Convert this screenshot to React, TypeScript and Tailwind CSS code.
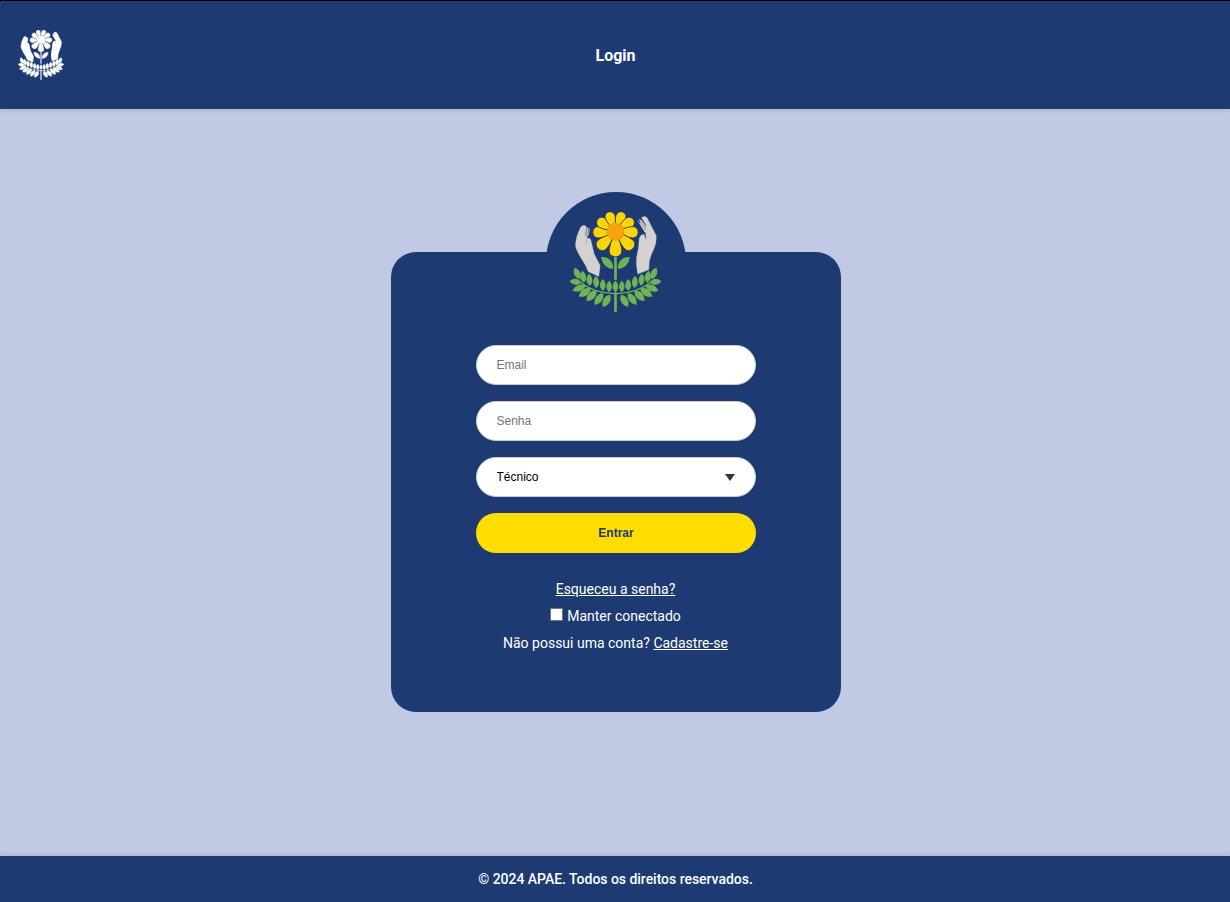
import React from "react";

type Leaf = [x: number, y: number, angle: number, length: number, width: number];

const SIDE_LEAVES: Leaf[] = [
  [111, 264, -24, 37, 18],
  [129, 274, -8, 36, 18],
  [148, 283, -4, 36, 17],
  [168, 290, -3, 36, 17],
  [188, 298, 0, 35, 17],
  [207, 303, 0, 34, 16],
  [106, 289, -83, 35, 18],
  [117, 308, 248, 42, 19],
  [134, 321, 236, 43, 20],
  [154, 331, 224, 43, 20],
  [176, 341, 216, 43, 20],
  [199, 346, 210, 42, 20],
];

const PETALS: [angle: number, reach: number, half: number][] = [
  [0, 75, 19],
  [46, 73, 18],
  [88, 68, 17],
  [124, 65, 16],
  [160, 63, 15],
  [200, 63, 15],
  [236, 65, 16],
  [272, 68, 17],
  [314, 73, 18],
];

function leafPath(length: number, width: number) {
  const h = length / 2;
  return `M0 ${-h} C${width * 0.68} ${-h * 0.4} ${width * 0.68} ${h * 0.5} 0 ${h} C${-width * 0.68} ${h * 0.5} ${-width * 0.68} ${-h * 0.4} 0 ${-h}Z`;
}

function Branch({ color }: { color: string }) {
  return (
    <g fill={color}>
      {SIDE_LEAVES.map(([x, y, angle, length, width], i) => (
        <path key={i} d={leafPath(length, width)} transform={`translate(${x} ${y}) rotate(${angle})`} />
      ))}
      <path d="M118 288 Q157 322 226 325" fill="none" stroke={color} strokeWidth="4" />
      <path d="M183 215 C203 213 220 227 219 250 C198 251 186 234 183 215Z" />
    </g>
  );
}

function Logo({ mono = false, className }: { mono?: boolean; className: string }) {
  const green = mono ? "#fff" : "#6fb356";
  const hand = mono ? "#fff" : "#d3d2d0";
  const petal = mono ? "#fff" : "#fed501";
  const core = mono ? "#fff" : "#f7a413";
  return (
    <svg viewBox="90 80 272 301" className={className} aria-hidden="true">
      <g fill={hand} stroke={hand} strokeWidth={mono ? 5 : 1}>
        <path d="M122 125 Q126 118 136 121 L139 126 L135 150 L138 154 L142 129 L145 128 L141 156 Q137 162 138 176 L140 160 Q147 155 152 163 L162 206 L180 240 L176 273 L144 258 Q139 242 126 223 Q108 194 106 180 Q107 154 122 125Z" />
        <path d="M304 97 Q313 90 321 98 L348 151 Q350 173 337 199 Q324 224 326 252 L293 266 Q286 236 290 212 Q296 190 297 160 Q302 145 312 148 Q317 158 316 170 Q320 151 315 141 L298 113 L301 111 L316 134 L318 131 L299 105 L302 103 L318 124 L319 121Z" />
      </g>
      <g fill="none" stroke={hand} strokeWidth="2">
        <path d="M142 126 L137 152 M149 129 L144 152" />
        <path d="M293 105 L314 140 M297 101 L318 134" />
      </g>
      <path d="M226 205 V283" stroke={mono ? "#d5daea" : green} strokeWidth="8" />
      <g stroke={mono ? "#fff" : "none"} strokeWidth="3">
        <Branch color={green} />
        <g transform="translate(452 0) scale(-1 1)">
          <Branch color={green} />
        </g>
      </g>
      <path d={leafPath(34, 16)} transform="translate(226 303)" fill={green} />
      <path d="M226 320 V381" stroke={mono ? "#d5daea" : green} strokeWidth="8" />
      <g fill={petal} stroke="#1d3a72" strokeWidth="2.5">
        {PETALS.map(([angle, r, w], i) => (
          <path
            key={i}
            transform={`translate(226 139) rotate(${angle})`}
            d={`M-8 20 C${-w * 0.7} 28 ${-w} ${r - 26} ${-w} ${r - 17} C${-w} ${r + 5.5} ${w} ${r + 5.5} ${w} ${r - 17} C${w} ${r - 26} ${w * 0.7} 28 8 20Z`}
          />
        ))}
      </g>
      <circle cx="226" cy="139" r="26" fill={core} stroke={mono ? "#8c9bbb" : "#d99812"} strokeWidth={mono ? 2 : 1.5} />
      {!mono && <path d="M228 117 Q243 119 247 131 M249 145 Q246 158 233 161" fill="none" stroke="#da920f" strokeWidth="1.5" />}
    </svg>
  );
}

const FIELD =
  "block h-10 w-full appearance-none rounded-[20px] border border-[#ccc] bg-white pr-5 pl-[19.5px] font-['Liberation_Sans',Arial,sans-serif] text-xs outline-none";

export default function App() {
  return (
    <div className="flex h-[902px] w-full flex-col overflow-hidden bg-black pt-px font-[Roboto,sans-serif] text-white">
      <div className="flex flex-1 flex-col overflow-hidden rounded-tl-[4px] bg-[#c2c9e4]">
        <header className="z-10 grid h-[108px] shrink-0 grid-cols-[1fr_auto_1fr] items-center bg-[#1d3a72] px-[18px] shadow-[0_2px_4px_rgba(0,0,0,0.1)]">
          <Logo mono className="h-[50px] w-[46px]" />
          <h1 className="pt-0.5 pl-px text-base font-bold">Login</h1>
        </header>

        <main className="flex flex-1 flex-col items-center pt-[143px] pl-0.5">
          <section className="relative h-[460px] w-[450px] rounded-[25px] bg-[#1d3a72] px-[85px] pt-[93px]">
            <div className="absolute -top-[60px] left-[155px] flex h-[140px] w-[140px] justify-center rounded-full bg-[#1d3a72] pt-[19.5px] pr-[1.5px]">
              <Logo className="h-[100.5px] w-[91px]" />
            </div>
            <form className="flex flex-col gap-4" onSubmit={(e) => e.preventDefault()}>
              <input type="email" placeholder="Email" aria-label="Email" className={`${FIELD} placeholder:text-[#757575]`} />
              <input type="password" placeholder="Senha" aria-label="Senha" className={`${FIELD} placeholder:text-[#757575]`} />
              <div className="relative">
                <select className={`${FIELD} text-black`} aria-label="Perfil" defaultValue="Técnico">
                  <option>Técnico</option>
                </select>
                <svg viewBox="0 0 10 7" className="pointer-events-none absolute top-[17px] right-[21px] h-[7px] w-[10px]">
                  <path d="M0 0H10L5 7Z" fill="#333" />
                </svg>
              </div>
              <button className="h-10 rounded-[20px] bg-[#ffdd00] font-['Liberation_Sans',Arial,sans-serif] text-xs font-bold text-[#1d3a72]">
                Entrar
              </button>
            </form>
            <div className="-mx-10 mt-[26px] flex flex-col items-center gap-[7px] pr-px text-sm leading-5">
              <a href="#" className="underline">Esqueceu a senha?</a>
              <label className="flex items-center gap-1">
                <input type="checkbox" className="mb-[3px] h-[13px] w-[13px] appearance-none border border-[#767676] bg-white" />
                Manter conectado
              </label>
              <p>
                Não possui uma conta? <a href="#" className="underline">Cadastre-se</a>
              </p>
            </div>
          </section>
        </main>

        <footer className="flex h-[46px] shrink-0 items-center justify-center bg-[#1d3a72] pl-px text-sm font-medium tracking-[-0.03px] shadow-[0_-2px_4px_rgba(0,0,0,0.1)]">
          © 2024 APAE. Todos os direitos reservados.
        </footer>
      </div>
    </div>
  );
}
